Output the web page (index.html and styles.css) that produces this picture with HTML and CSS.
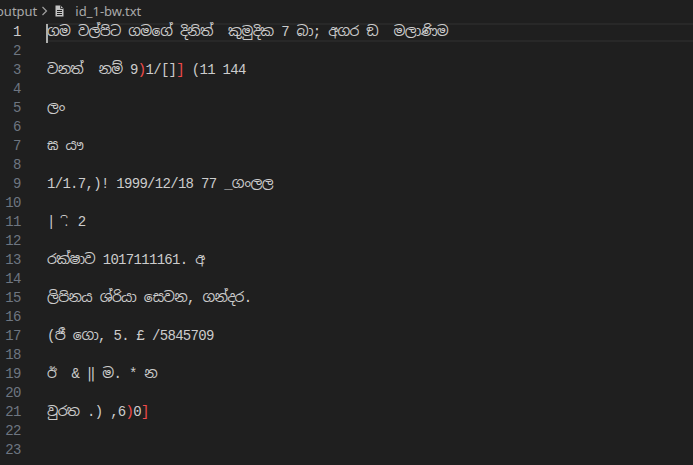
FILE: index.html
```html
<!DOCTYPE html>
<html>
<head>
<meta charset="utf-8">
<link rel="stylesheet" href="styles.css">
</head>
<body>
<div class="crumbs">
  <span class="crumb folder">output</span>
  <svg class="chev" width="8" height="10" viewBox="0 0 8 10"><path d="M1.5 1 L5.5 5 L1.5 9" fill="none" stroke="#a0a0a0" stroke-width="1.2"/></svg>
  <svg class="file-ico" width="9" height="12" viewBox="0 0 9 12"><path d="M0.5 0.5 H5.5 L8.5 3.5 V11.5 H0.5 Z" fill="#c5c5c5"/><path d="M5.5 0.5 V3.5 H8.5" fill="none" stroke="#1f1f1f" stroke-width="0.8"/><path d="M2 5.5 H7 M2 7.5 H7 M2 9.5 H7" stroke="#1f1f1f" stroke-width="1"/></svg>
  <span class="crumb file">id_1-bw.txt</span>
</div>
<div class="editor">
  <div class="row current"><span class="ln">1</span><span class="code"><span class="cursor"></span>ගම වල්පිට ගමගේ දිනිත්  කුමුදික 7 බා; අගර ඞ  මලාණිම</span></div>
  <div class="row"><span class="ln">2</span><span class="code"></span></div>
  <div class="row"><span class="ln">3</span><span class="code">වනත්  නම් 9<span class="red">)</span>1/[]<span class="red">]</span> (11 144</span></div>
  <div class="row"><span class="ln">4</span><span class="code"></span></div>
  <div class="row"><span class="ln">5</span><span class="code">ලං</span></div>
  <div class="row"><span class="ln">6</span><span class="code"></span></div>
  <div class="row"><span class="ln">7</span><span class="code">ඝ යෟ</span></div>
  <div class="row"><span class="ln">8</span><span class="code"></span></div>
  <div class="row"><span class="ln">9</span><span class="code">1/1.7,)! 1999/12/18 77 _ගංලල</span></div>
  <div class="row"><span class="ln">10</span><span class="code"></span></div>
  <div class="row"><span class="ln">11</span><span class="code">| <span class="glyph">.ි</span> 2</span></div>
  <div class="row"><span class="ln">12</span><span class="code"></span></div>
  <div class="row"><span class="ln">13</span><span class="code">රක්ෂාව 1017111161. අ</span></div>
  <div class="row"><span class="ln">14</span><span class="code"></span></div>
  <div class="row"><span class="ln">15</span><span class="code">ලිපිනය ශ්රියා සෙවන, ගන්දර.</span></div>
  <div class="row"><span class="ln">16</span><span class="code"></span></div>
  <div class="row"><span class="ln">17</span><span class="code">(ජී ගො, 5. £ /5845709</span></div>
  <div class="row"><span class="ln">18</span><span class="code"></span></div>
  <div class="row"><span class="ln">19</span><span class="code">ඊ  &amp; ‖ ම. * න</span></div>
  <div class="row"><span class="ln">20</span><span class="code"></span></div>
  <div class="row"><span class="ln">21</span><span class="code">වුරත .) ,6<span class="red">)</span>0<span class="red">]</span></span></div>
  <div class="row"><span class="ln">22</span><span class="code"></span></div>
  <div class="row"><span class="ln">23</span><span class="code"></span></div>
</div>
</body>
</html>
```

FILE: styles.css
```css
html, body {
  margin: 0;
  padding: 0;
  background: #1f1f1f;
  width: 693px;
  height: 465px;
  overflow: hidden;
}

.crumbs {
  height: 22px;
  display: flex;
  align-items: center;
  margin-left: -4px;
  font-family: "Noto Sans", "Open Sans", sans-serif;
  font-size: 13px;
  color: #a9a9a9;
}

.crumb.folder {
  margin-right: 4px;
}

.chev {
  margin-right: 6px;
}

.file-ico {
  margin-right: 11px;
}

.editor {
  margin-top: 1px;
  font-family: "Liberation Mono", "Noto Sans Sinhala", "Noto Serif Sinhala", "Iskoola Pota", monospace;
  font-size: 14px;
  letter-spacing: -0.7px;
}

.row {
  display: flex;
  height: 19px;
  line-height: 19px;
  align-items: center;
}

.ln {
  width: 21px;
  text-align: right;
  color: #6e7681;
  flex: none;
  letter-spacing: -0.5px;
}

.code {
  flex: 1;
  margin-left: 25px;
  padding-left: 1px;
  height: 19px;
  color: #cccccc;
  white-space: pre;
  position: relative;
  box-sizing: border-box;
}

.glyph {
  display: inline-block;
  width: 7.7px;
  text-align: center;
  letter-spacing: 0;
  font-size: 12px;
}

.current .ln {
  color: #cccccc;
}

.current .code {
  border-top: 2px solid #282828;
  border-bottom: 2px solid #282828;
  line-height: 15px;
}

.cursor {
  position: absolute;
  left: 0;
  top: -1px;
  width: 2px;
  height: 19px;
  background: #aeafad;
}

.red {
  color: #f14c4c;
}
```
